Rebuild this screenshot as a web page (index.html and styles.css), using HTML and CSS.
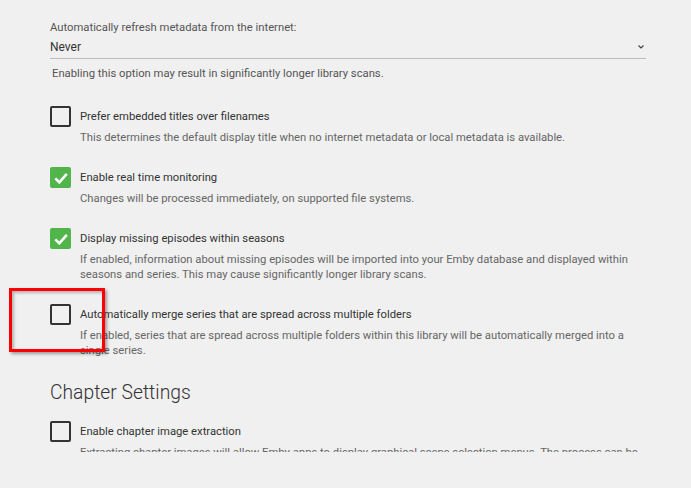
FILE: index.html
```html
<!DOCTYPE html>
<html>
<head>
<meta charset="utf-8">
<link rel="stylesheet" href="styles.css">
</head>
<body>
<div class="viewport">
  <div class="page">
    <div class="select-field">
      <div class="select-label">Automatically refresh metadata from the internet:</div>
      <div class="select-box">
        <span class="select-value">Never</span>
        <svg class="chevron" width="6" height="4" viewBox="0 0 6 4"><path d="M0.5 0.5 L3 3 L5.5 0.5" fill="none" stroke="#444" stroke-width="1.2"/></svg>
      </div>
      <div class="field-help">Enabling this option may result in significantly longer library scans.</div>
    </div>

    <div class="check-item">
      <div class="check-row"><span class="box"></span><span class="check-label">Prefer embedded titles over filenames</span></div>
      <div class="check-desc">This determines the default display title when no internet metadata or local metadata is available.</div>
    </div>

    <div class="check-item">
      <div class="check-row"><span class="box checked"><svg viewBox="0 0 20 20" width="20" height="20"><path d="M4.3 10.3 L8.3 14.3 L15.8 5.8" fill="none" stroke="#fff" stroke-width="2.6"/></svg></span><span class="check-label">Enable real time monitoring</span></div>
      <div class="check-desc">Changes will be processed immediately, on supported file systems.</div>
    </div>

    <div class="check-item">
      <div class="check-row"><span class="box checked"><svg viewBox="0 0 20 20" width="20" height="20"><path d="M4.3 10.3 L8.3 14.3 L15.8 5.8" fill="none" stroke="#fff" stroke-width="2.6"/></svg></span><span class="check-label">Display missing episodes within seasons</span></div>
      <div class="check-desc">If enabled, information about missing episodes will be imported into your Emby database and displayed within seasons and series. This may cause significantly longer library scans.</div>
    </div>

    <div class="check-item">
      <div class="check-row"><span class="box"></span><span class="check-label">Automatically merge series that are spread across multiple folders</span></div>
      <div class="check-desc">If enabled, series that are spread across multiple folders within this library will be automatically merged into a single series.</div>
      <div class="annotation"></div>
    </div>

    <h2 class="section-title">Chapter Settings</h2>

    <div class="check-item">
      <div class="check-row"><span class="box"></span><span class="check-label">Enable chapter image extraction</span></div>
      <div class="check-desc">Extracting chapter images will allow Emby apps to display graphical scene selection menus. The process can be slow, resource intensive, and may require several gigabytes of space.</div>
    </div>
  </div>
</div>
</body>
</html>
```

FILE: styles.css
```css
html, body {
  margin: 0;
  padding: 0;
  background: #f0f0f0;
}
body {
  font-family: Roboto, "Liberation Sans", sans-serif;
  color: #333;
}
.viewport {
  height: 452px;
  overflow: hidden;
}
.page {
  width: 596px;
  padding: 20px 0 0 50px;
}
.select-label {
  font-size: 11.25px;
  line-height: 15px;
  color: #555;
}
.select-box {
  display: flex;
  align-items: center;
  justify-content: space-between;
  height: 22px;
  border-bottom: 1px solid #bdbdbd;
  margin-top: 1px;
}
.select-value {
  font-size: 12px;
  color: #333;
}
.chevron {
  margin-right: 2px;
}
.field-help {
  font-size: 11.25px;
  line-height: 15px;
  color: #555;
  margin-top: 7px;
  padding-left: 2px;
}
.check-item {
  position: relative;
  margin-top: 22px;
}
.select-field + .check-item {
  margin-top: 25px;
}
.check-row {
  display: flex;
  align-items: center;
  height: 21px;
}
.box {
  box-sizing: border-box;
  width: 21px;
  height: 21px;
  border: 2px solid #333;
  border-radius: 2px;
  flex: none;
  display: flex;
}
.box.checked {
  border: none;
  background: #52b54b;
  border-radius: 2px;
  align-items: center;
  justify-content: center;
}
.check-label {
  font-size: 11.25px;
  margin-left: 9px;
  color: #333;
}
.check-desc {
  font-size: 11.25px;
  line-height: 15px;
  color: #666;
  margin: 3px 0 0 30px;
}
.annotation {
  position: absolute;
  left: -41px;
  top: -16px;
  width: 90px;
  height: 58px;
  border: 3px solid #f00;
  box-shadow: 2px 2px 3px rgba(0,0,0,0.35), inset 2px 2px 3px rgba(0,0,0,0.25);
}
.section-title {
  font-size: 19.3px;
  font-weight: 300;
  color: #333;
  margin: 22px 0 0 0;
  line-height: 26px;
}
.section-title + .check-item {
  margin-top: 15px;
}
```
